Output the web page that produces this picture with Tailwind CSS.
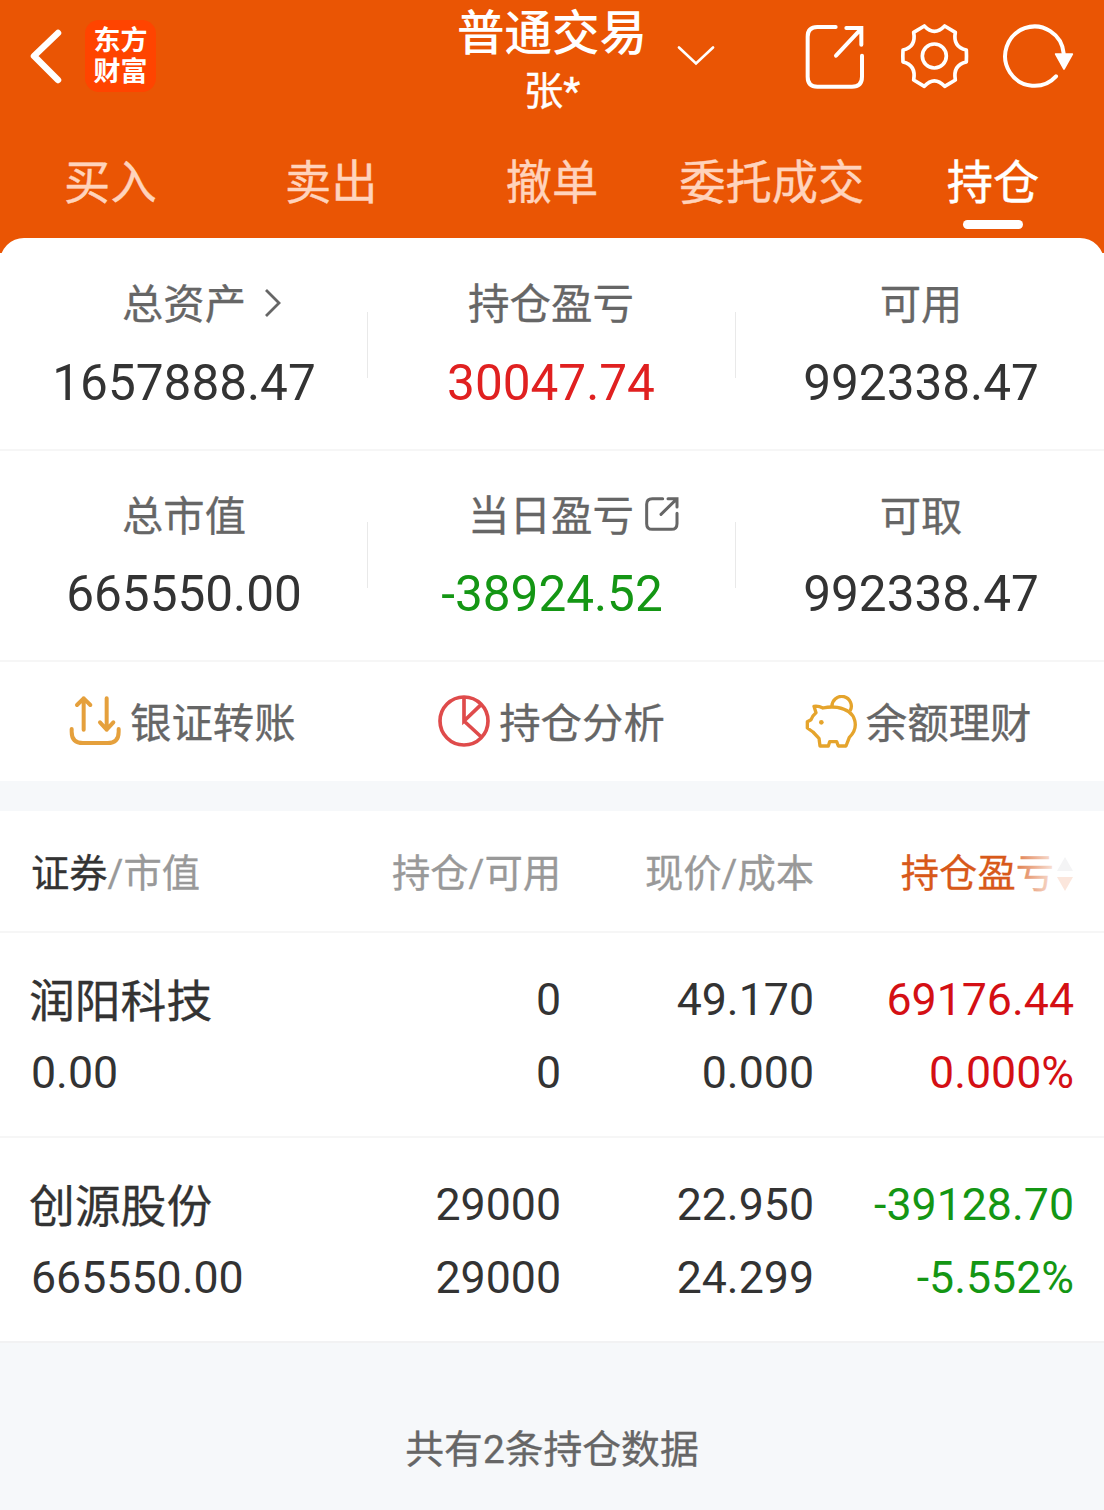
<!DOCTYPE html>
<html lang="zh-CN">
<head>
    <meta charset="UTF-8">
    <meta name="viewport" content="width=device-width, initial-scale=1.0">
    <title>普通交易</title>
    <script src="https://cdn.jsdelivr.net/npm/@tailwindcss/browser@4"></script>
</head>
<body class="bg-white font-[Roboto,'Noto_Sans_CJK_SC',sans-serif] text-[#333333]">
<div class="w-[1104px] h-[1510px] flex flex-col overflow-hidden">

    <!-- header -->
    <header class="h-[253px] shrink-0 bg-[#ea5504] text-white">
        <div class="grid grid-cols-3 h-[140px]">
            <div class="flex items-start pl-[28px] pt-[20px]">
                <svg class="w-[36px] h-[72px]" viewBox="0 0 36 72" fill="none" stroke="currentColor" stroke-width="6.5" stroke-linecap="round" stroke-linejoin="round">
                    <path d="M30 13 L6 36 L30 60"/>
                </svg>
                <div class="ml-[21px] w-[71px] h-[72px] pt-[2px] rounded-[14px] bg-[#ff4400] flex flex-col items-center justify-center text-[27px] leading-[31px] font-bold">
                    <span>东方</span>
                    <span>财富</span>
                </div>
            </div>
            <div class="flex flex-col items-center">
                <div class="flex items-start h-[66px]">
                    <h1 class="pt-[2px] text-[47.5px] leading-[64px] font-medium">普通交易</h1>
                    <span class="w-0 pt-[46px]">
                        <svg class="ml-[30px] w-[38px] h-[20px] max-w-none" viewBox="0 0 38 20" fill="none" stroke="currentColor" stroke-width="2.6" stroke-linecap="round">
                            <path d="M2 1.5 L19 17.5 L36 1.5"/>
                        </svg>
                    </span>
                </div>
                <div class="text-[39.5px] leading-[52px] [-webkit-text-stroke:0.4px]">张*</div>
            </div>
            <div class="flex items-start justify-end gap-[30px] pr-[27px] pt-[20px]">
                <svg class="w-[68px] h-[72px] -mr-px" viewBox="64 60 204 216" fill="none" stroke="currentColor" stroke-width="12" stroke-linecap="round">
                    <path d="M165 81 H110 Q81 81 81 110 V230 Q81 260 110 260 H214 Q244 260 244 230 V167"/>
                    <path d="M166 167 L242 86 M197 84 H242 V134"/>
                </svg>
                <svg class="w-[72px] h-[72px]" viewBox="357 60 216 216" fill="none" stroke="currentColor" stroke-width="11" stroke-linejoin="round">
                    <path d="M433 78 Q463 110 494 78 L526 97 Q518 141 559 150 Q560 168 559 186 Q518 195 526 240 L494 259 Q463 226 433 259 L401 240 Q409 195 369 186 Q368 168 369 150 Q409 141 401 97 Z"/>
                    <circle cx="463" cy="168" r="36"/>
                </svg>
                <svg class="w-[76px] h-[72px]" viewBox="664 60 228 216" fill="none" stroke="currentColor" stroke-width="12" stroke-linecap="round">
                    <path d="M852 160 A88 89 0 1 0 829 229"/>
                    <path d="M828 162 H878 L853 207 Z" fill="currentColor" stroke-width="5" stroke-linejoin="round"/>
                </svg>
            </div>
        </div>
        <nav class="grid grid-cols-5 text-center text-[46.3px] leading-[60px] pt-[13px] text-[#ffd3bc] [-webkit-text-stroke:0.4px]">
            <a>买入</a>
            <a>卖出</a>
            <a>撤单</a>
            <a class="pr-[2px]">委托成交</a>
            <a class="text-white flex flex-col items-center pr-px">持仓
                <span class="mt-[7px] w-[60px] h-[9px] rounded-full bg-white"></span>
            </a>
        </nav>
    </header>

    <!-- account summary -->
    <section class="-mt-[15px] shrink-0 rounded-t-[24px] bg-white">
        <div class="grid grid-cols-3 h-[213px] pt-[37px] border-b-2 border-[#f6f6f6] text-center">
            <div class="flex">
                <div class="grow">
                    <div class="flex justify-center items-center text-[41.3px] leading-[60px] text-[#666666] [-webkit-text-stroke:0.3px]">总资产
                        <span class="w-0">
                            <svg class="ml-[18px] -mt-[5px] w-[20px] h-[30px] max-w-none" viewBox="0 0 20 30" fill="none" stroke="currentColor" stroke-width="2.8">
                                <path d="M2 2 L15 15 L2 28"/>
                            </svg>
                        </span>
                    </div>
                    <div class="mt-[18px] text-[49.5px] leading-[60px]">1657888.47</div>
                </div>
                <div class="-ml-px mt-[37px] w-px h-[66px] bg-[#e9e9e9]"></div>
            </div>
            <div class="flex">
                <div class="grow pr-[2px]">
                    <div class="text-[41.5px] leading-[60px] text-[#666666] [-webkit-text-stroke:0.3px]">持仓盈亏</div>
                    <div class="mt-[18px] text-[49.5px] leading-[60px] text-[#e02020]">30047.74</div>
                </div>
                <div class="-ml-px mt-[37px] w-px h-[66px] bg-[#e9e9e9]"></div>
            </div>
            <div class="pl-[2px]">
                <div class="text-[41.3px] leading-[60px] text-[#666666] [-webkit-text-stroke:0.3px]">可用</div>
                <div class="mt-[18px] text-[49.5px] leading-[60px]">992338.47</div>
            </div>
        </div>
        <div class="grid grid-cols-3 h-[211px] pt-[36px] border-b-2 border-[#f6f6f6] text-center">
            <div class="flex">
                <div class="grow">
                    <div class="text-[41.3px] leading-[60px] text-[#666666] [-webkit-text-stroke:0.3px]">总市值</div>
                    <div class="mt-[17px] text-[49.5px] leading-[60px]">665550.00</div>
                </div>
                <div class="-ml-px mt-[35px] w-px h-[66px] bg-[#e9e9e9]"></div>
            </div>
            <div class="flex">
                <div class="grow">
                    <div class="flex justify-center items-center pr-[2px] text-[41.5px] leading-[60px] text-[#666666] [-webkit-text-stroke:0.3px]">当日盈亏
                        <span class="w-0">
                            <svg class="ml-[10px] -mt-[6px] w-[36px] h-[36px] max-w-none" viewBox="673 107 108 108" fill="none" stroke="currentColor" stroke-width="9" stroke-linecap="round">
                                <path d="M729 115 H698 Q681 115 681 132 V190 Q681 207 698 207 H755 Q772 207 772 190 V159"/>
                                <path d="M724 162 L770 117 M745 115 H772 V140"/>
                            </svg>
                        </span>
                    </div>
                    <div class="mt-[17px] text-[49.5px] leading-[60px] text-[#149614]">-38924.52</div>
                </div>
                <div class="-ml-px mt-[35px] w-px h-[66px] bg-[#e9e9e9]"></div>
            </div>
            <div class="pl-[2px]">
                <div class="text-[41.3px] leading-[60px] text-[#666666] [-webkit-text-stroke:0.3px]">可取</div>
                <div class="mt-[17px] text-[49.5px] leading-[60px]">992338.47</div>
            </div>
        </div>
        <div class="grid grid-cols-3 h-[119px] pr-px text-[41.4px] leading-[60px] text-[#666666] [-webkit-text-stroke:0.3px]">
            <div class="flex items-center justify-center gap-[9px] pr-[3px]">
                <svg class="w-[52px] h-[52px] -mt-[2px]" viewBox="88 74 156 156" fill="none" stroke="#e5a03c" stroke-width="12" stroke-linecap="round" stroke-linejoin="round">
                    <path d="M96 176 V184 Q96 218 130 218 H204 Q237 218 237 184 V176"/>
                    <path d="M132 178 V84 M112 104 L132 84 L152 104"/>
                    <path d="M201 84 V178 M181 156 L201 178 L221 156"/>
                </svg>
                <span class="pt-[4px]">银证转账</span>
            </div>
            <div class="flex items-center justify-center gap-[9px]">
                <svg class="w-[52px] h-[52px] -mt-[2px]" viewBox="53 75 156 156" fill="none" stroke="#df4b4b" stroke-width="11">
                    <circle cx="131" cy="153" r="72"/>
                    <path d="M131 81 V153 L183 103 M131 153 L183 201"/>
                </svg>
                <span class="pt-[4px]">持仓分析</span>
            </div>
            <div class="flex items-center justify-center gap-[9px] pr-[2px]">
                <svg class="w-[52px] h-[53px]" viewBox="75 73 156 159" fill="none" stroke="#e5a42c" stroke-width="10" stroke-linejoin="round">
                    <path d="M102 107 Q115 105 129 112 Q150 107 172 110 C235 121 236 173 208 200 L198 226 H175 L170 213 H149 L145 226 H120 L117 203 L99 184 L82 172 V153 L93 147 Q97 135 108 126 Z"/>
                    <path d="M156 108 A29 29 0 1 1 210 121"/>
                    <circle cx="124" cy="155" r="7" fill="#e5a42c" stroke="none"/>
                </svg>
                <span class="pt-[4px]">余额理财</span>
            </div>
        </div>
    </section>

    <div class="h-[30px] shrink-0 bg-[#f6f8fa]"></div>

    <!-- positions -->
    <section class="shrink-0 bg-white">
        <div class="grid grid-cols-[261px_269px_253px_260px] h-[122px] items-center pl-[31px] pt-[5px] border-b-2 border-[#f6f6f6] text-[38.3px] leading-[60px] text-[#999999] text-right whitespace-nowrap [-webkit-text-stroke:0.3px]">
            <div class="text-left"><span class="text-[#333333]">证券</span>/市值</div>
            <div>持仓/可用</div>
            <div>现价/成本</div>
            <div class="relative flex items-center justify-end gap-[3px] pr-px text-[#d8591a]">
                <span>持仓盈亏</span>
                <svg class="w-[16px] h-[34px]" viewBox="0 0 16 34">
                    <path d="M8 0 L16 14 H0 Z" fill="#f4f4f5"/>
                    <path d="M0 20 H16 L8 34 Z" fill="#fbe6dc"/>
                </svg>
                <span class="absolute right-[19px] top-0 w-[40px] h-full bg-linear-to-r from-white/20 to-white/85"></span>
            </div>
        </div>
        <div class="grid grid-cols-[261px_269px_253px_260px] content-start h-[205px] pt-[31px] pl-[31px] border-b-2 border-[#f6f6f6] text-[44.7px] leading-[73px] text-right whitespace-nowrap">
            <div class="-ml-[2px] pt-[2px] -mb-[2px] text-left text-[45.8px] [-webkit-text-stroke:0.3px]">润阳科技</div>
            <div>0</div>
            <div>49.170</div>
            <div class="text-[#d40f14]">69176.44</div>
            <div class="text-left">0.00</div>
            <div>0</div>
            <div>0.000</div>
            <div class="text-[#d40f14]">0.000%</div>
        </div>
        <div class="grid grid-cols-[261px_269px_253px_260px] content-start h-[205px] pt-[31px] pl-[31px] border-b-2 border-[#f2f2f3] text-[44.7px] leading-[73px] text-right whitespace-nowrap">
            <div class="-ml-[2px] pt-[2px] -mb-[2px] text-left text-[45.8px] [-webkit-text-stroke:0.3px]">创源股份</div>
            <div>29000</div>
            <div>22.950</div>
            <div class="text-[#149614]">-39128.70</div>
            <div class="text-left">665550.00</div>
            <div>29000</div>
            <div>24.299</div>
            <div class="text-[#149614]">-5.552%</div>
        </div>
    </section>

    <footer class="grow bg-[#f6f8fa] pt-[77px] text-center text-[38.8px] leading-[60px] text-[#666666] [-webkit-text-stroke:0.3px]">共有2条持仓数据</footer>
</div>
</body>
</html>
